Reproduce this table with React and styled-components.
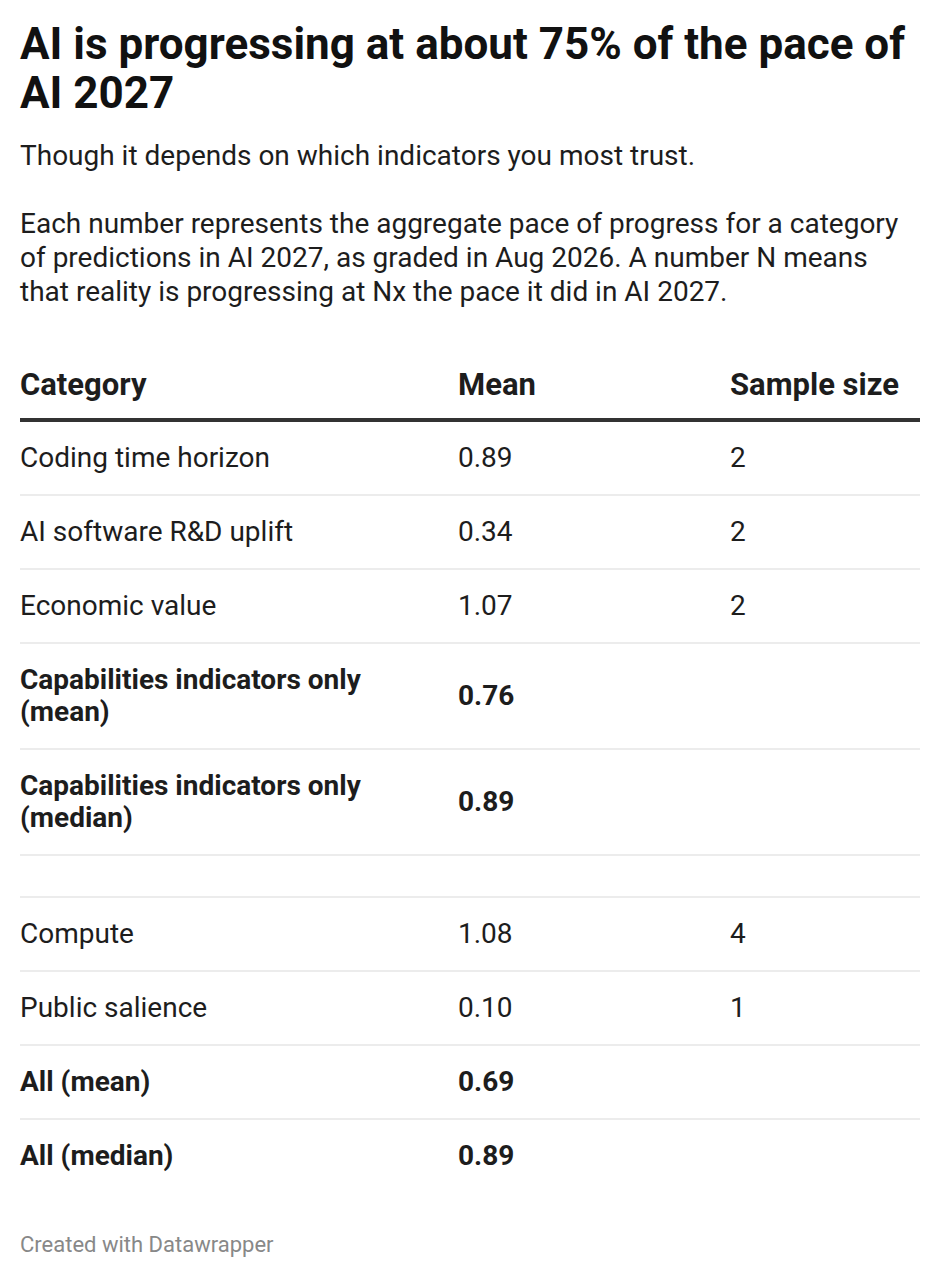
import React from 'react';
import styled, { createGlobalStyle } from 'styled-components';

const GlobalStyle = createGlobalStyle`
  html, body {
    margin: 0;
    padding: 0;
    background: #ffffff;
  }
  body {
    font-family: Roboto, "Liberation Sans", Arial, sans-serif;
    color: #1d1d1d;
    -webkit-font-smoothing: antialiased;
  }
`;

const Wrapper = styled.div`
  width: 900px;
  padding: 20px 20px 24px;
  display: flex;
  flex-direction: column;
`;

const Title = styled.h1`
  margin: 0;
  font-size: 44px;
  line-height: 49px;
  font-weight: 700;
  color: #111111;
`;

const Description = styled.div`
  margin-top: 21px;
  font-size: 28px;
  line-height: 34px;
  font-weight: 400;
  color: #1d1d1d;
`;

const Paragraph = styled.p`
  margin: 0 0 34px;
  &:last-child {
    margin-bottom: 0;
  }
`;

const Table = styled.table`
  margin-top: 44px;
  width: 100%;
  border-collapse: collapse;
  table-layout: fixed;
  font-size: 28px;
  line-height: 32px;
`;

const Column = styled.col`
  width: ${props => props.$width || 'auto'};
`;

const HeadCell = styled.th`
  padding: 16px 12px 17px 0;
  text-align: left;
  vertical-align: bottom;
  font-size: 31px;
  font-weight: 700;
  color: #1d1d1d;
  border-bottom: 4px solid #333333;
  white-space: nowrap;
`;

const Row = styled.tr`
  border-bottom: 2px solid #ececec;
  &:last-child {
    border-bottom: none;
  }
`;

const Cell = styled.td`
  padding: 20px 16px 20px 0;
  text-align: left;
  vertical-align: middle;
  font-weight: ${props => (props.$bold ? 700 : 400)};
  color: #1d1d1d;
`;

const Footer = styled.div`
  margin-top: 40px;
  font-size: 22px;
  line-height: 26px;
  color: #888888;
`;

const rows = [
  { category: 'Coding time horizon', mean: '0.89', size: '2' },
  { category: 'AI software R&D uplift', mean: '0.34', size: '2' },
  { category: 'Economic value', mean: '1.07', size: '2' },
  { category: 'Capabilities indicators only (mean)', mean: '0.76', size: '', bold: true },
  { category: 'Capabilities indicators only (median)', mean: '0.89', size: '', bold: true },
  { category: '', mean: '', size: '' },
  { category: 'Compute', mean: '1.08', size: '4' },
  { category: 'Public salience', mean: '0.10', size: '1' },
  { category: 'All (mean)', mean: '0.69', size: '', bold: true },
  { category: 'All (median)', mean: '0.89', size: '', bold: true },
];

const App = () => {
  return (
    <Wrapper>
      <GlobalStyle />
      <Title>AI is progressing at about 75% of the pace of AI 2027</Title>
      <Description>
        <Paragraph>Though it depends on which indicators you most trust.</Paragraph>
        <Paragraph>
          Each number represents the aggregate pace of progress for a category of predictions in AI
          2027, as graded in Aug 2026. A number N means that reality is progressing at Nx the pace it
          did in AI 2027.
        </Paragraph>
      </Description>
      <Table>
        <colgroup>
          <Column $width="438px" />
          <Column $width="272px" />
          <Column />
        </colgroup>
        <thead>
          <tr>
            <HeadCell>Category</HeadCell>
            <HeadCell>Mean</HeadCell>
            <HeadCell>Sample size</HeadCell>
          </tr>
        </thead>
        <tbody>
          {rows.map((row, i) => (
            <Row key={i}>
              <Cell $bold={row.bold}>{row.category}</Cell>
              <Cell $bold={row.bold}>{row.mean}</Cell>
              <Cell $bold={row.bold}>{row.size}</Cell>
            </Row>
          ))}
        </tbody>
      </Table>
      <Footer>Created with Datawrapper</Footer>
    </Wrapper>
  );
};

export default App;
